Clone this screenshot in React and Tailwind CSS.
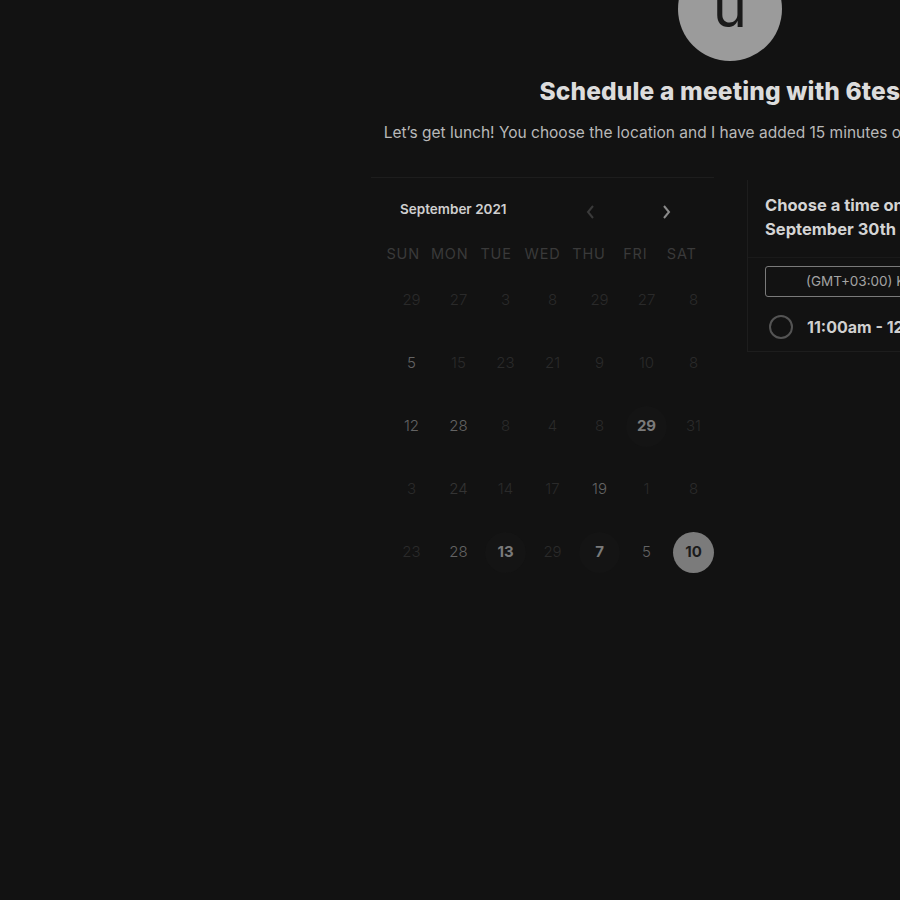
import React from "react";

const rows = [
  [["29", "d"], ["27", "d"], ["3", "d"], ["8", "d"], ["29", "d"], ["27", "d"], ["8", "d"]],
  [["5", "a"], ["15", "d"], ["23", "d"], ["21", "d"], ["9", "d"], ["10", "d"], ["8", "d"]],
  [["12", "a"], ["28", "a"], ["8", "d"], ["4", "d"], ["8", "d"], ["29", "b"], ["31", "d"]],
  [["3", "d"], ["24", "m"], ["14", "d"], ["17", "d"], ["19", "a"], ["1", "d"], ["8", "d"]],
  [["23", "d"], ["28", "a"], ["13", "b"], ["29", "d"], ["7", "b"], ["5", "a"], ["10", "s"]],
];

function Day({ v, k }) {
  if (k === "s")
    return (
      <div className="w-[41px] h-[41px] rounded-full bg-[#7b7b7b] flex items-center justify-center text-[15px] font-bold text-[#1b1b1b]">
        {v}
      </div>
    );
  if (k === "b")
    return (
      <div className="w-[41px] h-[41px] rounded-full bg-[#141414] flex items-center justify-center text-[15px] font-bold text-[#7a7a7a]">
        {v}
      </div>
    );
  const c =
    k === "a" ? "text-[#636363]" : k === "m" ? "text-[#343434]" : "text-[#2a2a2a]";
  return <div className={"text-[15px] font-light " + c}>{v}</div>;
}

export default function App() {
  return (
    <div
      className="w-[900px] h-[900px] bg-[#121212] overflow-hidden"
      style={{ fontFamily: "Inter, 'Noto Sans', sans-serif" }}
    >
      <div className="w-[1460px] flex flex-col items-center">
        <div className="w-[104px] h-[104px] -mt-[43px] rounded-full bg-[#9b9b9b] flex items-center justify-center">
          <span className="text-[58px] leading-none text-[#1a1a1a] -mt-[6px]">u</span>
        </div>
        <h1 className="mt-[14px] text-[24.5px] leading-[32px] font-extrabold text-[#dcdcdc] tracking-[0.15px]">
          Schedule a meeting with 6test1
        </h1>
        <p className="mt-[15px] text-[15.5px] leading-[22px] text-[#b9b9b9]">
          Let’s get lunch! You choose the location and I have added 15 minutes of travel time, both ways.
        </p>
        <div className="mt-[33px] flex gap-[33px] items-start">
          <div className="w-[343px] border-t border-[#1d1d1d] pt-[21px]">
            <div className="flex items-center h-[20px] pl-[29px]">
              <span className="text-[13.5px] font-semibold text-[#cfcfcf]">September 2021</span>
              <svg className="ml-[78px] mt-[6px]" width="10" height="16" viewBox="0 0 10 16" fill="none">
                <path d="M8 2L3 8l5 6" stroke="#3a3a3a" strokeWidth="2" />
              </svg>
              <svg className="ml-[67px] mt-[6px]" width="10" height="16" viewBox="0 0 10 16" fill="none">
                <path d="M2 2l5 6-5 6" stroke="#8a8a8a" strokeWidth="2" />
              </svg>
            </div>
            <div className="mt-[25px] ml-[9px] w-[325px] grid grid-cols-7 text-[14.5px] leading-[20px] text-[#3a3a3a] tracking-[0.8px]">
              {["SUN", "MON", "TUE", "WED", "THU", "FRI", "SAT"].map((d) => (
                <div key={d} className="text-center">{d}</div>
              ))}
            </div>
            <div className="mt-[5px] ml-[17px] w-[329px] flex flex-col">
              {rows.map((r, i) => (
                <div key={i} className="grid grid-cols-7 h-[63px]">
                  {r.map(([v, k], j) => (
                    <div key={j} className="flex items-center justify-center">
                      <Day v={v} k={k} />
                    </div>
                  ))}
                </div>
              ))}
            </div>
          </div>
          <div className="w-[342px] border-l border-b border-[#1d1d1d] mt-[3px]">
            <div className="border-b border-[#1a1a1a] px-[17px] pt-[13px] pb-[16px] text-[16.5px] leading-[24px] font-bold text-[#d4d4d4]">
              <div>Choose a time on Thursday,</div>
              <div>September 30th</div>
            </div>
            <div className="mx-[17px] mt-[8px] h-[31px] border border-[#7a7a7a] rounded-[3px] flex items-center pl-[40px] text-[13.5px] text-[#a3a3a3]">
              (GMT+03:00) Kuwait, Riyadh
            </div>
            <div className="mx-[17px] mt-[18px] mb-[12px] flex items-center h-[24px]">
              <div className="ml-[4px] w-[24px] h-[24px] rounded-full border-2 border-[#545454]" />
              <span className="ml-[14px] text-[16px] font-bold text-[#d0d0d0]">11:00am - 12:00pm</span>
            </div>
          </div>
        </div>
      </div>
    </div>
  );
}
